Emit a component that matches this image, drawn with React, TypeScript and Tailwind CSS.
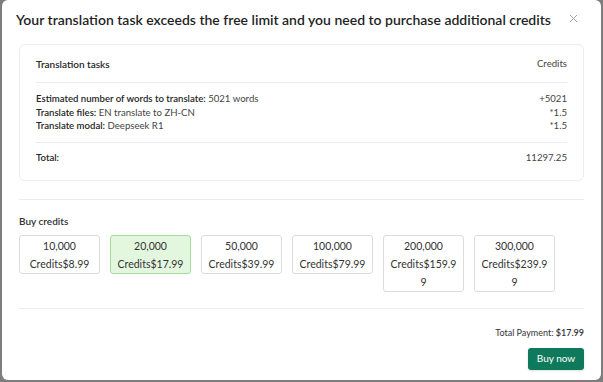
import React, { useState } from "react";

const packs = [
  { amount: "10,000", price: "$8.99" },
  { amount: "20,000", price: "$17.99" },
  { amount: "50,000", price: "$39.99" },
  { amount: "100,000", price: "$79.99" },
  { amount: "200,000", price: "$159.99" },
  { amount: "300,000", price: "$239.99" },
];

const rows = [
  { label: "Estimated number of words to translate:", value: "5021 words", credits: "+5021" },
  { label: "Translate files:", value: "EN translate to ZH-CN", credits: "*1.5" },
  { label: "Translate modal:", value: "Deepseek R1", credits: "*1.5" },
];

export default function App() {
  const [selected, setSelected] = useState(1);

  return (
    <div
      className="h-[382px] w-[603px] bg-[#7d7d7d] px-[2px] pb-[2px] overflow-hidden"
      style={{ fontFamily: 'Lato, "Open Sans", sans-serif' }}
    >
      <div className="relative h-full rounded-[6px] bg-white px-[17px] text-[#262626]">
        <div className="flex items-center pt-[10px] pb-[14px]">
          <h2 className="-ml-[3px] whitespace-nowrap text-[14px] font-semibold leading-[20px] text-[#1f1f1f]">
            Your translation task exceeds the free limit and you need to purchase additional credits
          </h2>
          {/* close */}
          <button className="absolute right-[23px] top-[14px] text-[#a0a0a0]">
            <svg width="9" height="9" viewBox="0 0 10 10" stroke="currentColor" strokeWidth="1.1">
              <path d="M1 1L9 9M9 1L1 9" />
            </svg>
          </button>
        </div>

        <div className="rounded-[6px] border border-[#ececec] px-[16px] text-[9.6px]">
          <div className="flex justify-between pt-[12px] pb-[11px] border-b border-[#ececec] leading-[14px]">
            <span className="font-semibold text-[10px]">Translation tasks</span>
            <span className="text-[#444]">Credits</span>
          </div>
          <div className="flex flex-col pt-[9px] pb-[9px] border-b border-[#ececec] leading-[13.5px]">
            {rows.map((r) => (
              <div key={r.label} className="flex justify-between">
                <span>
                  <span className="font-semibold">{r.label}</span> <span className="text-[#444]">{r.value}</span>
                </span>
                <span className="text-[#444]">{r.credits}</span>
              </div>
            ))}
          </div>
          <div className="flex justify-between pt-[8px] pb-[15px] leading-[14px]">
            <span className="font-semibold">Total:</span>
            <span className="text-[#444]">11297.25</span>
          </div>
        </div>

        <div className="mt-[18px] border-t border-[#ececec] pt-[14px]">
          <div className="text-[10px] font-semibold text-[#333] leading-[14px]">Buy credits</div>
          <div className="mt-[7px] flex items-start gap-[10px]">
            {packs.map((p, i) => (
              <button
                key={p.amount}
                onClick={() => setSelected(i)}
                className={`w-[81px] break-all rounded-[3px] border px-[6px] pt-[1px] text-center text-[10.5px] leading-[18px] text-[#333] ${
                  i === selected ? "border-[#a6dd9b] bg-[#e2f7de]" : "border-[#dcdcdc] bg-white"
                }`}
              >
                {p.amount}
                <br />
                Credits{p.price}
              </button>
            ))}
          </div>
        </div>

        <div className="mt-[16px] border-t border-[#ececec] pt-[17px]">
          <div className="text-right text-[9px] text-[#333] leading-[14px]">
            Total Payment: <span className="font-semibold">$17.99</span>
          </div>
          <div className="mt-[8px] flex justify-end">
            <button className="h-[22px] w-[56px] rounded-[3px] bg-[#0f7a5b] text-[10px] text-white shadow-sm">
              Buy now
            </button>
          </div>
        </div>
      </div>
    </div>
  );
}
